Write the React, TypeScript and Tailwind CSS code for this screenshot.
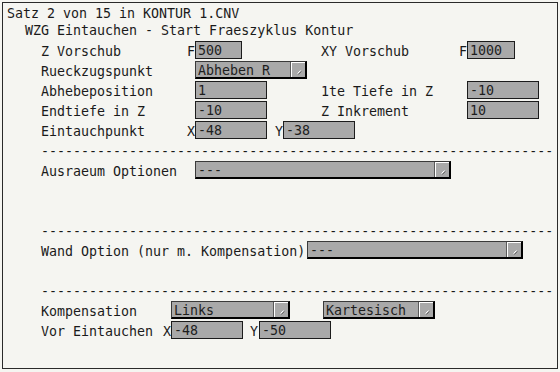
import React from "react";

const Btn = () => (
  <div className="ml-auto h-full w-[15px] border-l border-[#5a5a5a] flex">
    <div className="flex-1 border-t border-l border-white relative">
      <svg width="13" height="14" viewBox="0 0 13 14" className="absolute left-0 top-0">
        <line x1="5.5" y1="10.5" x2="8.5" y2="7.5" stroke="#ffffff" strokeWidth="1" />
        <line x1="6.5" y1="11.5" x2="9.5" y2="8.5" stroke="#6a6a6a" strokeWidth="1" />
      </svg>
    </div>
  </div>
);

const Input = ({ w, v }: { w: string; v: string }) => (
  <div className={`${w} h-[18px] border border-[#1c1c1c] bg-[#a9a9a9] pl-[2px] leading-[18px] text-[#1e1e1e] whitespace-pre overflow-visible`}>
    <div className="h-[16px] leading-[18px]">{v}</div>
  </div>
);

const Select = ({ w, v }: { w: string; v: string }) => (
  <div className={`${w} h-[18px] border-t border-l border-[#3a3a3a] border-b-2 border-r-2 border-b-black border-r-black bg-[#a9a9a9] flex items-stretch`}>
    <div className="pl-[2px] h-[15px] leading-[17px] text-[#1e1e1e] whitespace-pre">{v}</div>
    <Btn />
  </div>
);

const Row = ({ children }: { children?: React.ReactNode }) => (
  <div className="h-[20px] flex items-center pl-[38px] leading-[23px] whitespace-pre">{children}</div>
);

const Dashes = () => (
  <div className="h-[20px] pl-[38px] leading-[24px] whitespace-pre overflow-visible">{"-".repeat(64)}</div>
);

const L = ({ w, t }: { w: string; t: string }) => <div className={`${w} h-[20px]`}>{t}</div>;

export default function App() {
  return (
    <div
      className="w-[560px] h-[372px] bg-[#f5f5f1] pt-[2px] pl-[2px] text-[13.3px] text-[#1a1a1a]"
      style={{ fontFamily: "'DejaVu Sans Mono', 'Liberation Mono', monospace" }}
    >
      <div className="w-[556px] h-[367px] border border-[#2a2a2a] bg-[#f5f5f1]">
        <div className="h-[17px] leading-[22px] pl-[4px] whitespace-pre">Satz 2 von 15 in KONTUR 1.CNV</div>
        <div className="h-[20px] leading-[22px] pl-[22px] whitespace-pre">WZG Eintauchen - Start Fraeszyklus Kontur</div>

        <Row>
          <L w="w-[146px]" t="Z Vorschub" />
          <L w="w-[8px]" t="F" />
          <Input w="w-[47px]" v="500" />
          <div className="w-[79px]" />
          <L w="w-[138px]" t="XY Vorschub" />
          <L w="w-[8px]" t="F" />
          <Input w="w-[48px]" v="1000" />
        </Row>
        <Row>
          <L w="w-[154px]" t="Rueckzugspunkt" />
          <Select w="w-[112px]" v="Abheben R" />
        </Row>
        <Row>
          <L w="w-[154px]" t="Abhebeposition" />
          <Input w="w-[72px]" v="1" />
          <div className="w-[54px]" />
          <L w="w-[146px]" t="1te Tiefe in Z" />
          <Input w="w-[72px]" v="-10" />
        </Row>
        <Row>
          <L w="w-[154px]" t="Endtiefe in Z" />
          <Input w="w-[72px]" v="-10" />
          <div className="w-[54px]" />
          <L w="w-[146px]" t="Z Inkrement" />
          <Input w="w-[72px]" v="10" />
        </Row>
        <Row>
          <L w="w-[146px]" t="Eintauchpunkt" />
          <L w="w-[8px]" t="X" />
          <Input w="w-[72px]" v="-48" />
          <div className="w-[8px]" />
          <L w="w-[8px]" t="Y" />
          <Input w="w-[72px]" v="-38" />
        </Row>
        <Dashes />
        <Row>
          <L w="w-[154px]" t="Ausraeum Optionen" />
          <Select w="w-[256px]" v="---" />
        </Row>
        <Row />
        <Row />
        <Dashes />
        <Row>
          <L w="w-[266px]" t="Wand Option (nur m. Kompensation)" />
          <Select w="w-[216px]" v="---" />
        </Row>
        <Row />
        <Dashes />
        <Row>
          <L w="w-[130px]" t="Kompensation" />
          <Select w="w-[119px]" v="Links" />
          <div className="w-[33px]" />
          <Select w="w-[112px]" v="Kartesisch" />
        </Row>
        <Row>
          <L w="w-[122px]" t="Vor Eintauchen" />
          <L w="w-[8px]" t="X" />
          <Input w="w-[72px]" v="-48" />
          <div className="w-[7px]" />
          <L w="w-[9px]" t="Y" />
          <Input w="w-[72px]" v="-50" />
        </Row>
      </div>
    </div>
  );
}
